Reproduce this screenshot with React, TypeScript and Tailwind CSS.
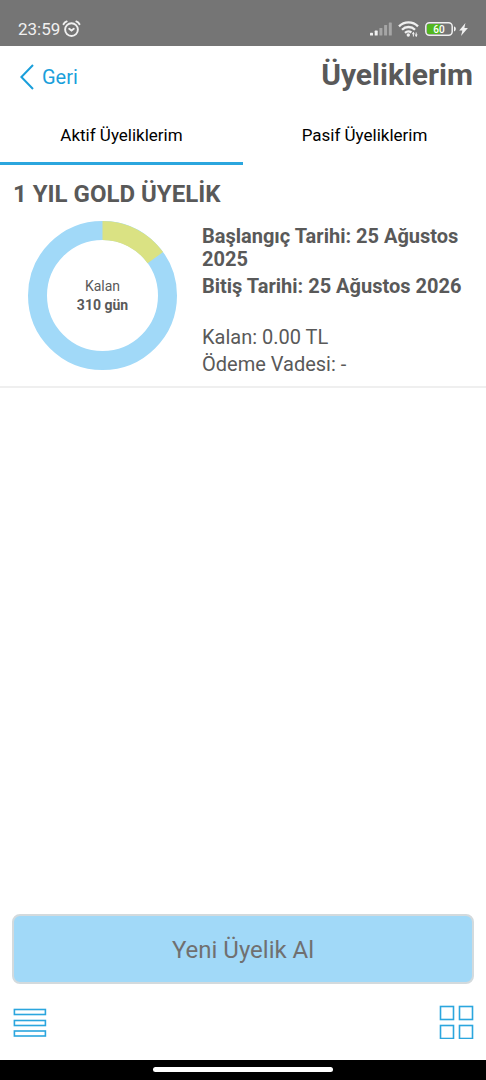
import React, { useState } from "react";

const TOTAL_DAYS = 365;
const REMAINING_DAYS = 310;

const tabs = [
  { id: "active", label: "Aktif Üyeliklerim" },
  { id: "passive", label: "Pasif Üyeliklerim" },
];

const StatusBar = () => (
  <div className="flex h-[46px] shrink-0 items-end justify-between bg-[#757575] pr-[18px] pb-[6px] pl-[18px] text-[#f0f0f0]">
    <div className="flex items-center gap-[2px]">
      <span className="text-[17px] leading-[22px]">23:59</span>
      {/* ALARM */}
      <svg width="19" height="18" viewBox="0 0 19 18" fill="none" stroke="currentColor" strokeWidth="1.9" strokeLinecap="round">
        <circle cx="9.5" cy="9.6" r="6.4" />
        <path d="M7.2 8.800l2.300 1.800 2.300-1.800M1.500 4.200C2.200 2.900 3.300 2 4.700 1.400M17.500 4.200c-.7-1.300-1.800-2.200-3.200-2.800" />
      </svg>
    </div>
    <div className="flex h-[22px] items-center">
      {/* SIGNAL */}
      <svg className="mr-[6px]" width="22" height="14" viewBox="0 0 22 14" fill="currentColor">
        <rect x="0" y="10.8" width="3" height="2.7" rx="0.6" />
        <rect x="4.7" y="8.6" width="3" height="4.9" rx="0.6" />
        <rect x="9.4" y="6" width="3" height="7.5" rx="0.6" opacity="0.4" />
        <rect x="14.1" y="3" width="3" height="10.5" rx="0.6" opacity="0.4" />
        <rect x="18.8" y="0.5" width="3" height="13" rx="0.6" opacity="0.4" />
      </svg>
      {/* WIFI */}
      <svg className="mr-[6px]" width="21" height="16" viewBox="0 0 21 16" fill="none" stroke="currentColor" strokeWidth="2.3">
        <path d="M1 5.4a13.4 13.4 0 0 1 19 0M4 8.7a9.200 9.200 0 0 1 13 0M7 11.900a5 5 0 0 1 6.400-.4" />
        <circle cx="10.300" cy="14" r="1.700" fill="currentColor" stroke="none" />
        <path d="M15.400 11.500v4M18.200 11.500v4" strokeWidth="1" />
        <path d="M13.800 13.200l1.600-2.500 1.400 2.500zM16.800 13.600l1.400 2.400 1.500-2.400z" fill="currentColor" stroke="none" />
      </svg>
      {/* BATTERY */}
      <svg className="mr-[3px]" width="31" height="14" viewBox="0 0 31 14">
        <rect x="2" y="2" width="14" height="10" rx="2" fill="#52b71f" />
        <rect x="0.8" y="0.8" width="26.4" height="12.4" rx="3.6" fill="none" stroke="currentColor" strokeWidth="1.5" />
        <path d="M29 4.600v4.800c1.200-.3 1.800-1.200 1.800-2.400S30.200 4.900 29 4.600z" fill="currentColor" />
        <text x="14" y="10.8" textAnchor="middle" fontSize="10" fontWeight="500" fill="#fff">
          60
        </text>
      </svg>
      {/* CHARGING */}
      <svg width="9" height="13" viewBox="0 0 9 13" fill="currentColor">
        <path d="M6.4 0L.2 7.600h3.200L2 13l6.900-7.900H5.400z" />
      </svg>
    </div>
  </div>
);

const RemainingChart = () => {
  const radius = 65;
  const length = 2 * Math.PI * radius;
  const used = (length * (TOTAL_DAYS - REMAINING_DAYS)) / TOTAL_DAYS;

  return (
    <div className="grid h-[149px] w-[149px] shrink-0 place-items-center">
      <svg className="col-start-1 row-start-1" width="149" height="149" viewBox="0 0 149 149" fill="none" strokeWidth="19">
        <circle cx="74.5" cy="74.5" r={radius} stroke="#a1d9f8" />
        <circle
          cx="74.5"
          cy="74.5"
          r={radius}
          stroke="#dae283"
          strokeDasharray={`${used} ${length - used}`}
          transform="rotate(-90 74.5 74.5)"
        />
      </svg>
      <p className="col-start-1 row-start-1 text-center text-sm leading-[19px]">
        Kalan
        <br />
        <strong>{REMAINING_DAYS} gün</strong>
      </p>
    </div>
  );
};

const App = () => {
  const [activeTab, setActiveTab] = useState("active");

  return (
    <div className="flex min-h-screen w-full flex-col bg-white font-[Roboto,sans-serif] text-[#595959]">
      <StatusBar />

      {/* HEADER */}
      <header className="flex h-[61px] items-start justify-between pt-[11px] pr-[13px] pl-5">
        <button type="button" className="flex h-10 items-center gap-2 text-xl text-[#1a9fdb]">
          <svg width="14" height="26" viewBox="0 0 14 26" fill="none" stroke="currentColor" strokeWidth="2">
            <path d="M13 1L1.4 13 13 25" />
          </svg>
          Geri
        </button>
        <h1 className="text-[30px] leading-9 font-bold">Üyeliklerim</h1>
      </header>

      {/* TABS */}
      <div role="tablist" className="grid grid-cols-2">
        {tabs.map((tab) => (
          <button
            key={tab.id}
            type="button"
            role="tab"
            aria-selected={activeTab === tab.id}
            onClick={() => setActiveTab(tab.id)}
            className={`h-[58px] border-b-[3px] pt-[3px] text-[17px] text-black ${
              activeTab === tab.id ? "border-[#2ba6de]" : "border-transparent"
            }`}
          >
            {tab.label}
          </button>
        ))}
      </div>

      <main className="flex grow flex-col">
        {activeTab === "active" && (
          <section className="border-b-2 border-[#efefef] pt-[14px] pb-[10px]">
            <h2 className="px-[13px] text-2xl leading-[30px] font-bold">1 YIL GOLD ÜYELİK</h2>
            <div className="mt-3 flex gap-[25px] pr-4 pl-7">
              <RemainingChart />
              <div className="flex flex-col gap-1 pt-1 text-xl leading-[23px]">
                <p className="font-bold">Başlangıç Tarihi: 25 Ağustos 2025</p>
                <p className="font-bold">Bitiş Tarihi: 25 Ağustos 2026</p>
                <p className="mt-6">Kalan: 0.00 TL</p>
                <p>Ödeme Vadesi: -</p>
              </div>
            </div>
          </section>
        )}
      </main>

      {/* NEW MEMBERSHIP */}
      <div className="px-3">
        <button
          type="button"
          className="h-[70px] w-full rounded-lg border-2 border-[#d3dadd] bg-[#a1d9f8] pt-[2px] text-2xl text-[#707070]"
        >
          Yeni Üyelik Al
        </button>
      </div>

      {/* BOTTOM BAR */}
      <nav className="flex h-[76px] items-center justify-between px-3">
        <button type="button" aria-label="Menü">
          <svg width="36" height="30" viewBox="0 0 36 30" fill="none" stroke="#2ba6de" strokeWidth="1.6">
            <rect x="2.4" y="2.5" width="31" height="5" />
            <rect x="2.4" y="13.5" width="31" height="5" />
            <rect x="2.4" y="24" width="31" height="5" />
          </svg>
        </button>
        <button type="button" aria-label="Kısayollar">
          <svg width="35" height="34" viewBox="0 0 35 34" fill="none" stroke="#2ba6de" strokeWidth="1.6">
            <rect x="1.5" y="1.5" width="13" height="13" />
            <rect x="20.5" y="1.5" width="13" height="13" />
            <rect x="1.5" y="20.5" width="13" height="13" />
            <rect x="20.5" y="20.5" width="13" height="13" />
          </svg>
        </button>
      </nav>

      {/* GESTURE BAR */}
      <div className="flex h-5 shrink-0 justify-center bg-black pt-[7px]">
        <div className="h-[5px] w-[180px] rounded-full bg-white" />
      </div>
    </div>
  );
};

export default App;
